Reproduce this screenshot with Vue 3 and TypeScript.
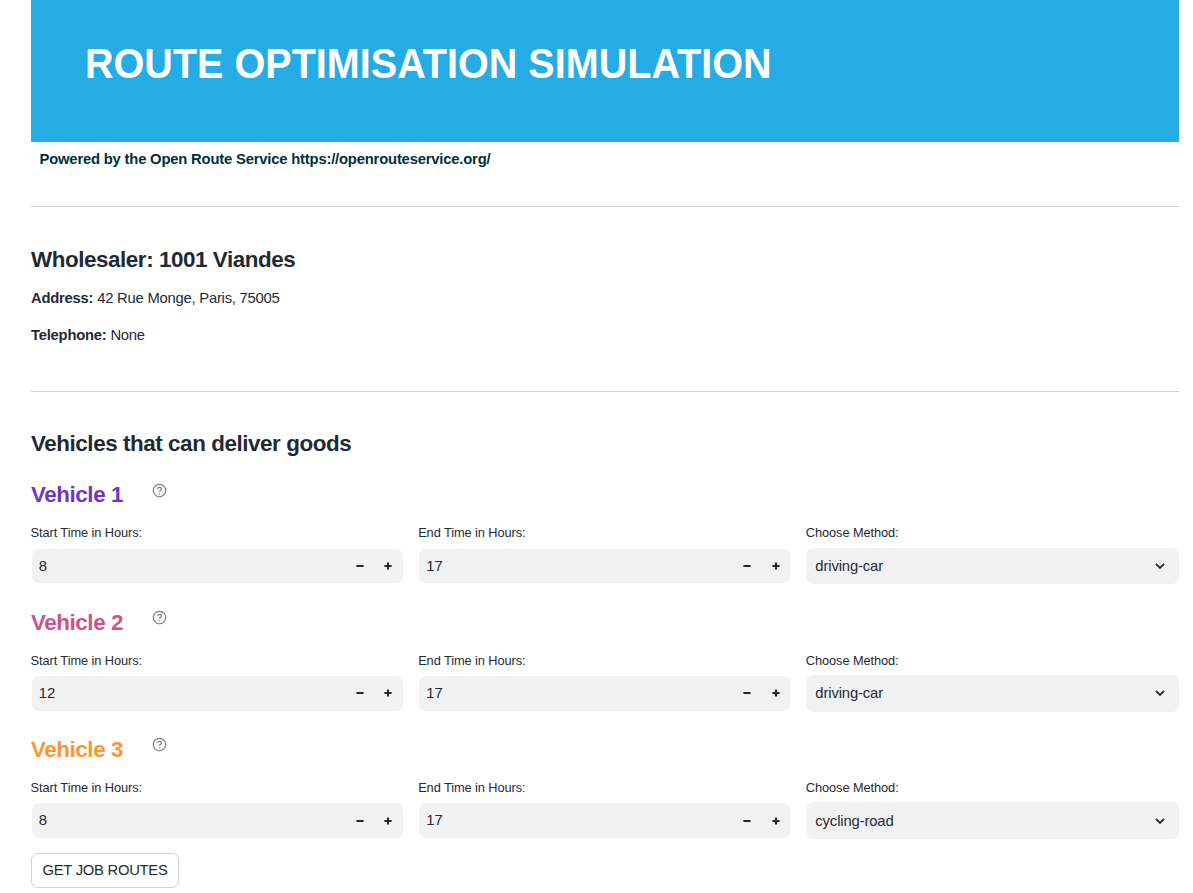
<script setup lang="ts">
import { ref } from 'vue'

interface Vehicle {
  name: string
  tone: string
  start: number
  end: number
  method: string
}

const vehicles = ref<Vehicle[]>([
  { name: 'Vehicle 1', tone: 'violet', start: 8, end: 17, method: 'driving-car' },
  { name: 'Vehicle 2', tone: 'pink', start: 12, end: 17, method: 'driving-car' },
  { name: 'Vehicle 3', tone: 'orange', start: 8, end: 17, method: 'cycling-road' },
])

const hourFields: { key: 'start' | 'end'; label: string }[] = [
  { key: 'start', label: 'Start Time in Hours:' },
  { key: 'end', label: 'End Time in Hours:' },
]

function step(vehicle: Vehicle, key: 'start' | 'end', delta: number) {
  vehicle[key] = Math.min(24, Math.max(0, vehicle[key] + delta))
}
</script>

<template>
  <main class="page">
    <header class="banner">
      <h1>ROUTE OPTIMISATION SIMULATION</h1>
    </header>
    <p class="powered">Powered by the Open Route Service https://openrouteservice.org/</p>

    <section class="wholesaler">
      <h2>Wholesaler: 1001 Viandes</h2>
      <p class="address"><strong>Address:</strong> 42 Rue Monge, Paris, 75005</p>
      <p class="phone"><strong>Telephone:</strong> None</p>
    </section>

    <section class="vehicles">
      <h2 class="vehicles-title">Vehicles that can deliver goods</h2>
      <article v-for="v in vehicles" :key="v.name" class="vehicle">
        <div class="vehicle-head">
          <h3 :class="v.tone">{{ v.name }}</h3>
          <svg class="help" viewBox="0 0 24 24" fill="none" stroke="currentColor" stroke-width="2" stroke-linecap="round" stroke-linejoin="round">
            <circle cx="12" cy="12" r="10" />
            <path d="M9.09 9a3 3 0 0 1 5.83 1c0 2-3 3-3 3" />
            <path d="M12 17h.01" />
          </svg>
        </div>
        <div class="fields">
          <div v-for="f in hourFields" :key="f.key" class="field">
            <div class="label">{{ f.label }}</div>
            <div class="number">
              <span class="value">{{ v[f.key] }}</span>
              <button class="step" aria-label="Decrease" @click="step(v, f.key, -1)">
                <svg viewBox="0 0 8 8"><path d="M0.4 4h7.2" /></svg>
              </button>
              <button class="step" aria-label="Increase" @click="step(v, f.key, 1)">
                <svg viewBox="0 0 8 8"><path d="M0.4 4h7.2M4 0.4v7.2" /></svg>
              </button>
            </div>
          </div>
          <div class="field">
            <div class="label">Choose Method:</div>
            <div class="select">
              <span>{{ v.method }}</span>
              <svg class="chevron" viewBox="0 0 10 6"><path d="M1 0.9l4 4 4-4" /></svg>
            </div>
          </div>
        </div>
      </article>
    </section>

    <button class="submit">GET JOB ROUTES</button>
  </main>
</template>

<style>
body {
  background: #fff;
  overflow: hidden;
}
</style>

<style scoped>
.page {
  box-sizing: border-box;
  height: 893px;
  padding: 0 14px 0 31px;
  font-family: "Liberation Sans", Arial, sans-serif;
  font-size: 14.8px;
  letter-spacing: -0.23px;
  color: #1f2a34;
  overflow: hidden;
}
h1, h2, h3, p {
  margin: 0;
  white-space: nowrap;
}
.banner {
  height: 142px;
  box-sizing: border-box;
  padding: 39px 0 0 54.2px;
  background: #26ace5;
}
h1 {
  font-size: 42.6px;
  line-height: 48px;
  letter-spacing: 0;
  transform: scaleX(0.929);
  transform-origin: 0 0;
  color: #fff;
}
.powered {
  height: 64px;
  box-sizing: border-box;
  padding: 7px 0 0 8.5px;
  line-height: 20px;
  font-weight: 700;
  letter-spacing: -0.19px;
  color: #00303c;
}
.wholesaler {
  height: 185px;
  box-sizing: border-box;
  border-top: 1px solid #d0d2d4;
  padding-top: 37px;
}
h2, h3 {
  font-size: 22.4px;
  line-height: 32px;
  letter-spacing: -0.43px;
}
.address, .phone {
  line-height: 20px;
}
.address {
  margin-top: 12px;
}
.phone {
  margin-top: 17px;
}
.vehicles {
  height: 462px;
  box-sizing: border-box;
  border-top: 1px solid #d0d2d4;
  padding-top: 36px;
}
.vehicles-title {
  margin-bottom: 19px;
}
.vehicle {
  height: 127.2px;
}
.vehicle-head {
  display: flex;
  height: 47px;
}
.vehicle-head h3 {
  width: 120.7px;
  padding-top: 0.4px;
}
.help {
  width: 15px;
  height: 15px;
  margin-top: 4px;
  color: #7d8189;
}
.violet { color: #6f36c8; }
.pink { color: #d15085; }
.orange { color: #ff9530; }
.fields {
  display: grid;
  grid-template-columns: repeat(3, 1fr);
  gap: 15px;
}
.label {
  box-sizing: border-box;
  height: 22px;
  padding-top: 0.4px;
  line-height: 14px;
  margin-left: -0.5px;
  font-size: 12.8px;
  letter-spacing: -0.08px;
  white-space: nowrap;
}
.number, .select {
  display: flex;
  align-items: center;
  box-sizing: border-box;
  background: #f2f2f2;
}
.number {
  height: 34.4px;
  margin: 1px 1px 0 0.7px;
  padding-left: 7px;
  border-radius: 7px;
}
.value {
  flex: 1;
  padding-bottom: 0.5px;
  letter-spacing: 0;
}
.step {
  width: 28.6px;
  height: 100%;
  padding: 0;
  border: 0;
  background: none;
  display: flex;
  align-items: center;
  justify-content: center;
}
.step svg {
  width: 8px;
  height: 8px;
  stroke: #1f2a34;
  stroke-width: 2;
}
.select {
  height: 36.4px;
  padding: 0 14px 0 9px;
  border-radius: 7px;
  justify-content: space-between;
  letter-spacing: -0.13px;
}
.chevron {
  width: 10px;
  height: 6px;
  fill: none;
  stroke: #1f2a34;
  stroke-width: 1.9;
}
.submit {
  width: 148px;
  height: 35px;
  padding: 0 0 2px;
  border: 1px solid #d0d2d4;
  border-radius: 7px;
  background: #fff;
  font: inherit;
  letter-spacing: -0.26px;
  color: inherit;
  white-space: nowrap;
}
</style>
